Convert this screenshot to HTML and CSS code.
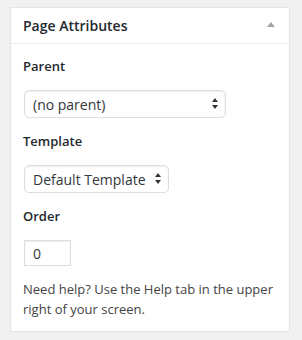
FILE: index.html
```html
<!DOCTYPE html>
<html lang="en">
<head>
    <meta charset="UTF-8">
    <meta name="viewport" content="width=device-width, initial-scale=1.0">
    <title>Page Attributes</title>
    <link rel="stylesheet" href="styles.css">
</head>
<body>

    <div class="postbox">
        <div class="postbox-header">
            <h2>Page Attributes</h2>
            <span class="toggle-indicator">
                <svg width="8" height="5" viewBox="0 0 8 5"><path d="M0 5 L4 0 L8 5 Z" fill="#a0a5aa"/></svg>
            </span>
        </div>
        <div class="inside">
            <p class="attr-label">Parent</p>
            <div class="select-wrap parent-select">
                <select>
                    <option>(no parent)</option>
                </select>
                <svg class="select-arrows" width="6" height="11" viewBox="0 0 6 11"><path d="M0 4 L3 0 L6 4 Z M0 7 L3 11 L6 7 Z" fill="#333"/></svg>
            </div>

            <p class="attr-label">Template</p>
            <div class="select-wrap template-select">
                <select>
                    <option>Default Template</option>
                </select>
                <svg class="select-arrows" width="6" height="11" viewBox="0 0 6 11"><path d="M0 4 L3 0 L6 4 Z M0 7 L3 11 L6 7 Z" fill="#333"/></svg>
            </div>

            <p class="attr-label">Order</p>
            <input class="order-input" type="text" value="0">

            <p class="help">Need help? Use the Help tab in the upper right of your screen.</p>
        </div>
    </div>

</body>
</html>
```

FILE: styles.css
```css
/* General */
body {
    font-family: "Open Sans", "Liberation Sans", sans-serif;
    background: #f1f1f1;
    margin: 0;
    padding: 7px 0 0 10px;
    color: #444;
    font-size: 13px;
}

/* Box */
.postbox {
    width: 278px;
    background: #fff;
    border: 1px solid #e5e5e5;
    box-shadow: 0 1px 1px rgba(0, 0, 0, 0.04);
}

.postbox-header {
    display: flex;
    align-items: center;
    justify-content: space-between;
    border-bottom: 1px solid #eee;
    padding: 8px 14px 8px 12px;
}

.postbox-header h2 {
    margin: 0;
    font-size: 14px;
    font-weight: 600;
    line-height: 19px;
    color: #23282d;
}

.toggle-indicator {
    display: flex;
    margin-top: -3px;
}

/* Content */
.inside {
    display: flex;
    flex-direction: column;
    align-items: flex-start;
    padding: 12px 12px 12px;
}

.attr-label {
    margin: 0 0 14px;
    font-weight: 600;
    line-height: 20px;
    color: #23282d;
}

.select-wrap {
    position: relative;
    margin: 0 0 13px 1px;
}

.select-wrap select {
    appearance: none;
    -webkit-appearance: none;
    height: 28px;
    margin: 0;
    padding: 0 20px 0 8px;
    border: 1px solid #ddd;
    border-radius: 5px;
    background: #fff;
    box-shadow: inset 0 1px 2px rgba(0, 0, 0, 0.07);
    font-family: inherit;
    font-size: 14px;
    color: #32373c;
}

.parent-select select {
    width: 202px;
}

.template-select select {
    width: 145px;
}

.select-arrows {
    position: absolute;
    right: 8px;
    top: 8px;
    pointer-events: none;
}

.order-input {
    width: 47px;
    height: 26px;
    box-sizing: border-box;
    margin: 0 0 14px 1px;
    padding: 0 8px;
    border: 1px solid #ddd;
    box-shadow: inset 0 1px 2px rgba(0, 0, 0, 0.07);
    font-family: inherit;
    font-size: 14px;
    color: #32373c;
}

.help {
    margin: 0;
    line-height: 19.5px;
}
```
